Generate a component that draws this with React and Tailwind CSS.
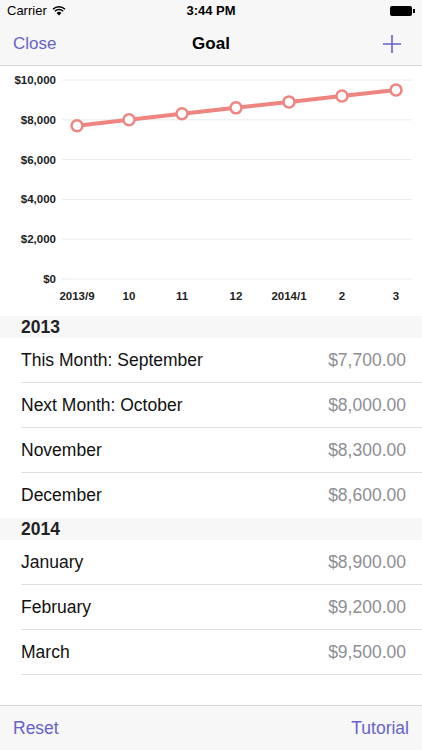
import React from "react";

const font = { fontFamily: '"Helvetica Neue", "Liberation Sans", Arial, sans-serif' };

const points = [
  { label: "2013/9", x: 77, v: 7700 },
  { label: "10", x: 129, v: 8000 },
  { label: "11", x: 182, v: 8300 },
  { label: "12", x: 236, v: 8600 },
  { label: "2014/1", x: 289, v: 8900 },
  { label: "2", x: 342, v: 9200 },
  { label: "3", x: 396, v: 9500 },
];

const yOf = (v) => 213 - v * 0.0199;

const sections = [
  {
    year: "2013",
    rows: [
      ["This Month: September", "$7,700.00"],
      ["Next Month: October", "$8,000.00"],
      ["November", "$8,300.00"],
      ["December", "$8,600.00"],
    ],
  },
  {
    year: "2014",
    rows: [
      ["January", "$8,900.00"],
      ["February", "$9,200.00"],
      ["March", "$9,500.00"],
    ],
  },
];

const Chart = () => (
  <svg width="422" height="250" viewBox="0 0 422 250" className="block">
    {[0, 2000, 4000, 6000, 8000, 10000].map((t) => (
      <g key={t}>
        <line x1="62" x2="412" y1={yOf(t)} y2={yOf(t)} stroke="#ececec" strokeWidth="1" />
        <text
          x="56"
          y={yOf(t) + 4}
          textAnchor="end"
          fontSize="11.5"
          fontWeight="700"
          fill="#222"
          fontFamily="Liberation Sans, Arial, sans-serif"
        >
          {"$" + t.toLocaleString("en-US")}
        </text>
      </g>
    ))}
    <polyline
      points={points.map((p) => `${p.x},${yOf(p.v)}`).join(" ")}
      fill="none"
      stroke="#ef8580"
      strokeWidth="4"
      strokeLinejoin="round"
    />
    {points.map((p) => (
      <g key={p.label}>
        <circle cx={p.x} cy={yOf(p.v)} r="5.5" fill="#fff" stroke="#ef8580" strokeWidth="2.5" />
        <text
          x={p.x}
          y="234"
          textAnchor="middle"
          fontSize="11.5"
          fontWeight="700"
          fill="#222"
          fontFamily="Liberation Sans, Arial, sans-serif"
        >
          {p.label}
        </text>
      </g>
    ))}
  </svg>
);

const App = () => {
  return (
    <div className="relative flex flex-col w-[422px] h-[750px] bg-white overflow-hidden" style={font}>
      {/* status + nav */}
      <div className="bg-[#f7f7f7] border-b border-[#d8d8d8]">
        <div className="flex items-center h-[22px] px-[7px] text-[13px] text-black">
          <div className="flex items-center gap-[5px] w-[120px]">
            <span>Carrier</span>
            <svg width="14" height="10" viewBox="0 0 14 10">
              <path d="M7 9.5 L4.6 7 A3.4 3.4 0 0 1 9.4 7 Z" fill="#000" />
              <path d="M2.9 5.3 A5.8 5.8 0 0 1 11.1 5.3" fill="none" stroke="#000" strokeWidth="1.5" />
              <path d="M1 3.3 A8.5 8.5 0 0 1 13 3.3" fill="none" stroke="#000" strokeWidth="1.5" />
            </svg>
          </div>
          <div className="flex-1 text-center font-semibold">3:44 PM</div>
          <div className="w-[120px] flex justify-end items-center">
            <div className="w-[22px] h-[10px] bg-black rounded-[2px]" />
            <div className="w-[2px] h-[4px] bg-black ml-[1px]" />
          </div>
        </div>
        <div className="flex items-center h-[43px] px-[13px] text-[17px]">
          <div className="w-[100px] text-[#6762c8]">Close</div>
          <div className="flex-1 text-center font-bold text-black">Goal</div>
          <div className="w-[100px] flex justify-end pr-[7px]">
            <svg width="20" height="20" viewBox="0 0 20 20">
              <path d="M10 1 V19 M1 10 H19" stroke="#6762c8" strokeWidth="1.6" />
            </svg>
          </div>
        </div>
      </div>

      <Chart />

      {/* list */}
      <div className="flex-1">
        {sections.map((s) => (
          <div key={s.year}>
            <div className="h-[22px] bg-[#f7f7f7] px-[21px] flex items-center text-[17.5px] font-semibold text-[#222]">
              {s.year}
            </div>
            {s.rows.map(([label, amount], i) => (
              <div key={label} className="pl-[21px]">
                <div
                  className={`h-[45px] flex items-center justify-between pr-[16px] text-[17.5px] ${
                    i === s.rows.length - 1 && s.year === "2013" ? "" : "border-b border-[#e0e0e0]"
                  }`}
                >
                  <span className="text-[#111]">{label}</span>
                  <span className="text-[#8e8e93]">{amount}</span>
                </div>
              </div>
            ))}
          </div>
        ))}
      </div>

      {/* toolbar */}
      <div className="h-[45px] bg-[#f7f7f7] border-t border-[#d8d8d8] flex items-center justify-between px-[13px] text-[17.5px] text-[#6762c8]">
        <span>Reset</span>
        <span>Tutorial</span>
      </div>
    </div>
  );
};

export default App;
